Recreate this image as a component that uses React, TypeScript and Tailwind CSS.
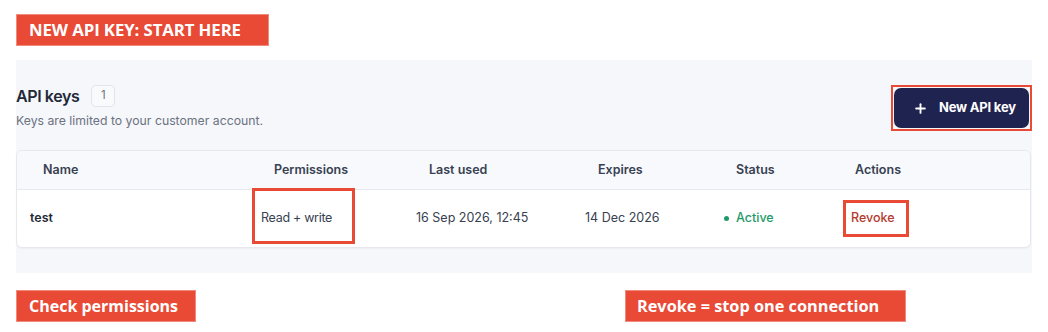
import { Plus } from 'lucide-react';

const label = "bg-[#e84a36] border border-[#f08a7c] text-white font-bold h-[32px] flex items-center font-['Open_Sans',sans-serif]";

export default function App() {
  return (
    <div className="w-[1048px] h-[332px] bg-white font-['Inter',sans-serif] overflow-hidden">
      <div className="pt-[14px] pl-[16px]">
        <div className={`${label} w-[253px] pl-[12px] text-[16.8px] tracking-[-0.1px]`}>NEW API KEY: START HERE</div>
      </div>

      <div className="mt-[14px] ml-[16px] w-[1016px] bg-[#f6f7fb] pt-[25px] pb-[25px]">
        <div className="flex items-start justify-between">
          <div>
            <div className="flex items-center h-[22px]">
              <h2 className="text-[16px] font-semibold text-[#1f2937] leading-none tracking-[-0.4px]">API keys</h2>
              <span className="ml-[12px] w-[24px] h-[22px] rounded-[5px] border border-[#e2e4ea] bg-[#f9fafc] flex items-center justify-center text-[11.5px] text-[#6b7280]">1</span>
            </div>
            <p className="mt-[6px] text-[12.25px] leading-[16px] text-[#6b7280]">Keys are limited to your customer account.</p>
          </div>
          <div className="border-2 border-[#e84a36] p-px">
            <button type="button" className="w-[135px] h-[40px] rounded-[7px] bg-[#1f2350] text-white flex items-center pl-[19px] gap-[11px] text-[13px] font-bold tracking-[-0.2px]">
              <Plus size={15} strokeWidth={3} />
              New API key
            </button>
          </div>
        </div>

        <div className="mt-[19px] w-[1015px] bg-white rounded-[6px] border border-[#e6e8ee] shadow-[0_1px_2px_rgba(0,0,0,0.04)] overflow-hidden">
          <div className="grid grid-cols-[224px_140px_160px_150px_125px_1fr] h-[39px] items-center bg-[#f8f9fc] border-b border-[#e6e8ee] text-[12.5px] font-semibold text-[#374151]">
            <div className="pl-[26px]">Name</div>
            <div className="pl-[33px]">Permissions</div>
            <div className="pl-[48px]">Last used</div>
            <div className="pl-[57px]">Expires</div>
            <div className="pl-[45px]">Status</div>
            <div className="pl-[39px]">Actions</div>
          </div>
          <div className="grid grid-cols-[224px_140px_160px_150px_125px_1fr] h-[57px] items-center text-[12.5px] text-[#1f2937]">
            <div className="pl-[13px] font-semibold">test</div>
            <div className="relative h-full flex items-center pl-[20px] text-[#374151] tracking-[-0.3px]">
              <span className="absolute left-[11px] top-[-2px] w-[103px] h-[56px] border-[3px] border-[#e84a36]" />
              Read + write
            </div>
            <div className="pl-[35px] text-[#374151]">16 Sep 2026, 12:45</div>
            <div className="pl-[44px] text-[#374151]">14 Dec 2026</div>
            <div className="pl-[33px] flex items-center gap-[7px] text-[#1f9a6a] font-medium">
              <span className="w-[5px] h-[5px] rounded-full bg-[#1f9a6a]" />
              Active
            </div>
            <div className="pl-[27px]">
              <span className="inline-flex items-center h-[37px] border-[3px] border-[#e84a36] pl-[5px] pr-[11px] text-[#b53a2e] font-medium">Revoke</span>
            </div>
          </div>
        </div>
      </div>

      <div className="mt-[17px] ml-[16px] flex">
        <div className={`${label} w-[180px] pl-[12px] text-[16px]`}>Check permissions</div>
        <div className={`${label} ml-[429px] w-[281px] pl-[11px] text-[16.3px]`}>Revoke = stop one connection</div>
      </div>
    </div>
  );
}
